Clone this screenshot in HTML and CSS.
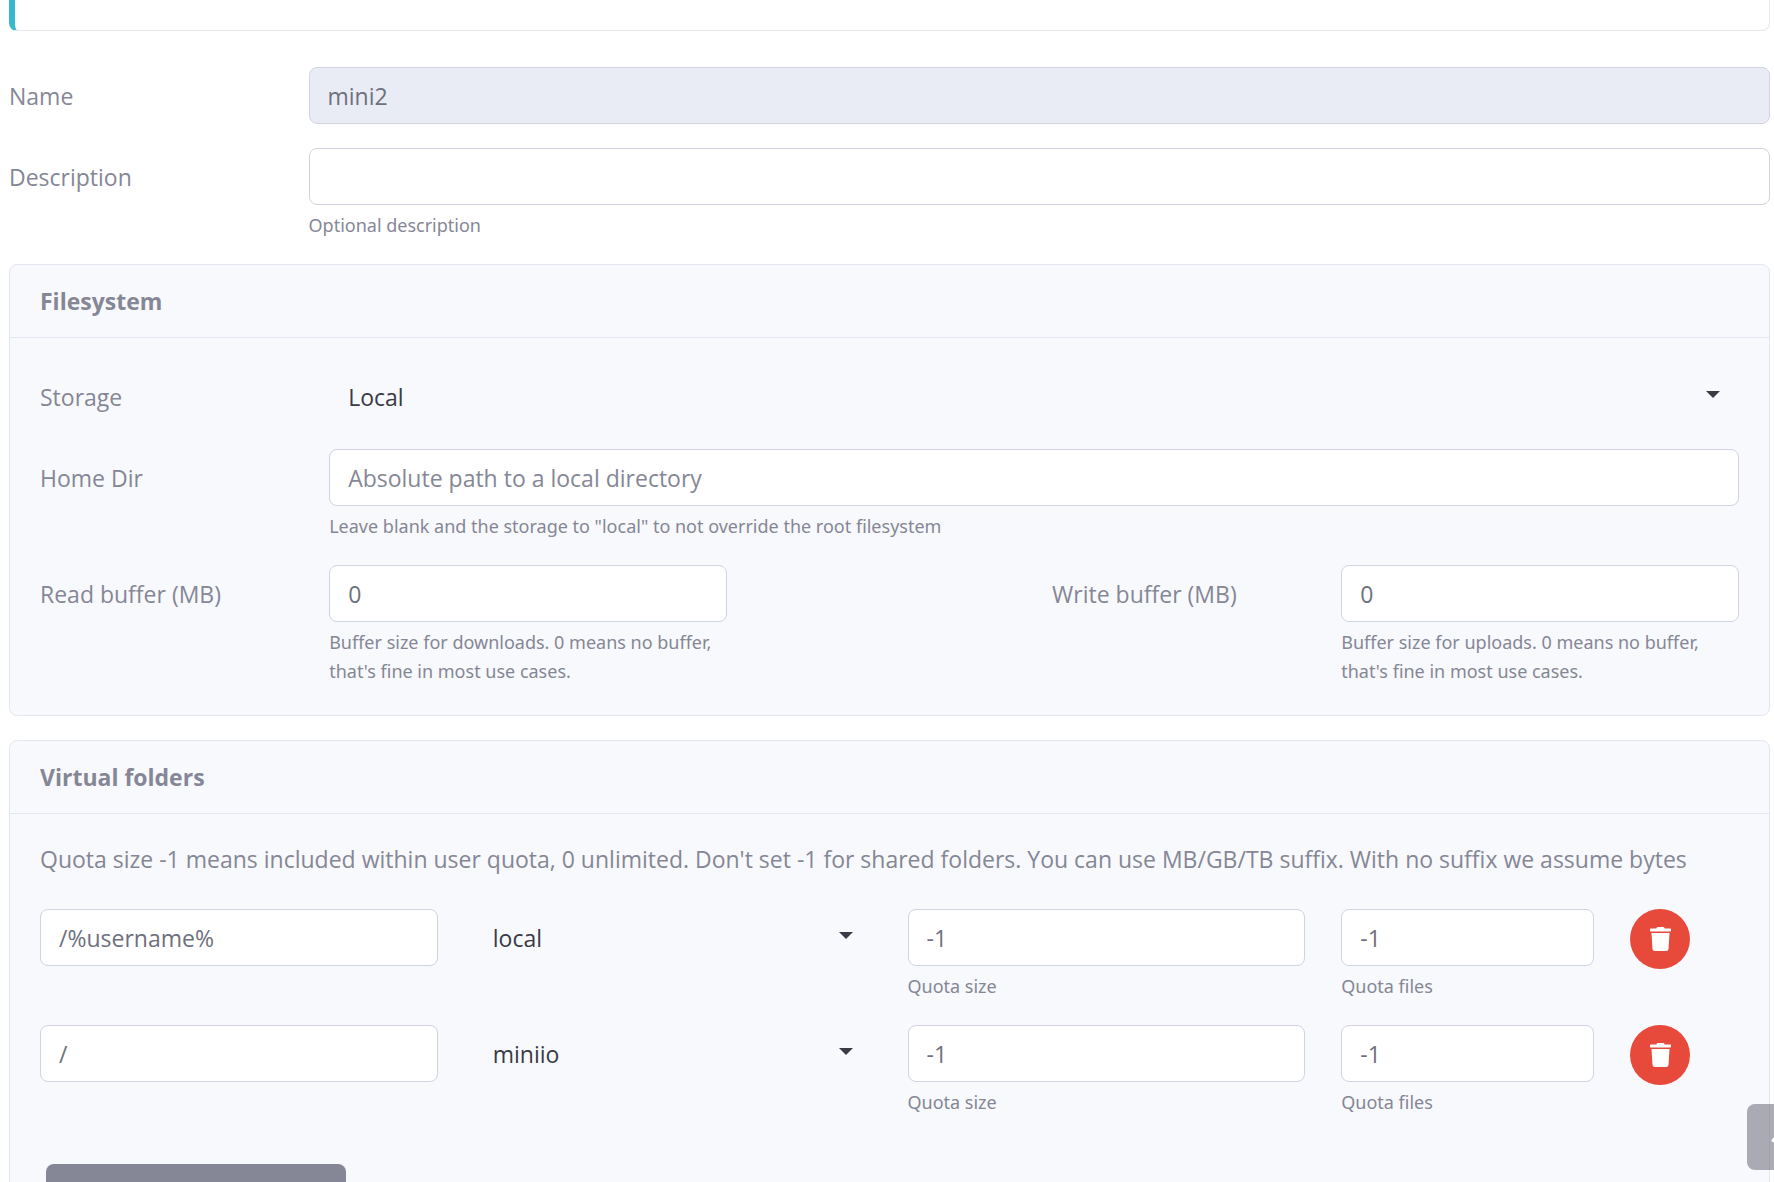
FILE: index.html
```html
<!DOCTYPE html>
<html lang="en">
<head>
<meta charset="utf-8">
<meta name="viewport" content="width=device-width, initial-scale=1">
<title>Group mini2</title>
<link rel="stylesheet" href="styles.css">
</head>
<body>
<main class="page">
  <div class="callout"></div>
  <form class="form">
    <div class="row">
      <label class="label" for="name">Name</label>
      <div class="span-10"><input class="control" id="name" type="text" value="mini2" readonly></div>
    </div>
    <div class="row">
      <label class="label" for="description">Description</label>
      <div class="span-10">
        <input class="control" id="description" type="text" aria-describedby="description-help">
        <small class="help" id="description-help">Optional description</small>
      </div>
    </div>

    <section class="card">
      <h2 class="card-header">Filesystem</h2>
      <div class="card-body">
        <div class="row">
          <label class="label" for="storage">Storage</label>
          <div class="span-10"><select class="control select" id="storage"><option>Local</option></select></div>
        </div>
        <div class="row">
          <label class="label" for="home-dir">Home Dir</label>
          <div class="span-10">
            <input class="control" id="home-dir" type="text" placeholder="Absolute path to a local directory" aria-describedby="home-help">
            <small class="help" id="home-help">Leave blank and the storage to "local" to not override the root filesystem</small>
          </div>
        </div>
        <div class="row">
          <label class="label" for="read-buffer">Read buffer (MB)</label>
          <div class="span-3">
            <input class="control" id="read-buffer" type="text" inputmode="numeric" value="0" aria-describedby="read-help">
            <small class="help" id="read-help">Buffer size for downloads. 0 means no buffer, that's fine in most use cases.</small>
          </div>
          <label class="label second-label" for="write-buffer">Write buffer (MB)</label>
          <div class="span-3">
            <input class="control" id="write-buffer" type="text" inputmode="numeric" value="0" aria-describedby="write-help">
            <small class="help" id="write-help">Buffer size for uploads. 0 means no buffer, that's fine in most use cases.</small>
          </div>
        </div>
      </div>
    </section>

    <section class="card">
      <h2 class="card-header">Virtual folders</h2>
      <div class="card-body folders">
        <p class="note">Quota size -1 means included within user quota, 0 unlimited. Don't set -1 for shared folders. You can use MB/GB/TB suffix. With no suffix we assume bytes</p>
        <div class="row">
          <div class="span-3"><input class="control" type="text" value="/%username%" aria-label="Mount path"></div>
          <div class="span-3"><select class="control select" aria-label="Folder"><option>local</option></select></div>
          <div class="span-3">
            <input class="control" id="size-1" type="text" value="-1">
            <label class="help" for="size-1">Quota size</label>
          </div>
          <div class="span-2">
            <input class="control" id="files-1" type="text" value="-1">
            <label class="help" for="files-1">Quota files</label>
          </div>
          <button class="delete" type="button" aria-label="Delete folder">
            <svg class="trash" viewBox="0 0 448 512" aria-hidden="true"><path d="M432 32H312l-9.400-18.700A24 24 0 0 0 281.100 0H166.800a23.720 23.720 0 0 0-21.400 13.300L136 32H16A16 16 0 0 0 0 48v32a16 16 0 0 0 16 16h416a16 16 0 0 0 16-16V48a16 16 0 0 0-16-16zM32 128l21.200 339a48 48 0 0 0 47.900 45h245.800a48 48 0 0 0 47.900-45L416 128z"/></svg>
          </button>
        </div>
        <div class="row">
          <div class="span-3"><input class="control" type="text" value="/" aria-label="Mount path"></div>
          <div class="span-3"><select class="control select" aria-label="Folder"><option>miniio</option></select></div>
          <div class="span-3">
            <input class="control" id="size-2" type="text" value="-1">
            <label class="help" for="size-2">Quota size</label>
          </div>
          <div class="span-2">
            <input class="control" id="files-2" type="text" value="-1">
            <label class="help" for="files-2">Quota files</label>
          </div>
          <button class="delete" type="button" aria-label="Delete folder">
            <svg class="trash" viewBox="0 0 448 512" aria-hidden="true"><path d="M432 32H312l-9.400-18.700A24 24 0 0 0 281.100 0H166.800a23.720 23.720 0 0 0-21.400 13.300L136 32H16A16 16 0 0 0 0 48v32a16 16 0 0 0 16 16h416a16 16 0 0 0 16-16V48a16 16 0 0 0-16-16zM32 128l21.200 339a48 48 0 0 0 47.900 45h245.800a48 48 0 0 0 47.900-45L416 128z"/></svg>
          </button>
        </div>
        <button class="add" type="button" aria-label="Add folder"></button>
      </div>
    </section>
  </form>
</main>
<a class="to-top" href="#name" aria-label="Back to top">
  <svg class="angle" viewBox="0 0 16 10" aria-hidden="true"><path d="M2 8l6-6 6 6"/></svg>
</a>
</body>
</html>
```

FILE: styles.css
```css
* {
  box-sizing: border-box;
}

body {
  margin: 0;
  height: 100vh;
  overflow: hidden;
  background: #fff;
  color: #858796;
  font-family: "Open Sans", "Noto Sans", sans-serif;
  font-size: 23px;
  line-height: 36px;
}

.page {
  padding: 0 4px 24px 9px;
}

.callout {
  height: 31px;
  margin-bottom: 36px;
  border: 1px solid #e3e6f0;
  border-top: 0;
  border-left: 6px solid #36b9cc;
  border-radius: 0 0 8px 8px;
}

.form,
.card-body {
  display: flex;
  flex-direction: column;
  gap: 24px;
}

.row {
  display: grid;
  grid-template-columns: repeat(12, minmax(0, 1fr));
  column-gap: 36px;
  align-items: start;
}

.label {
  grid-column: span 2;
  padding: 11px 0 10px;
}

.second-label {
  grid-column: 8 / span 2;
}

.span-10 {
  grid-column: span 10;
}

.span-3 {
  grid-column: span 3;
}

.span-2 {
  grid-column: span 2;
}

.control {
  display: block;
  width: 100%;
  height: 57px;
  padding: 0 18px;
  border: 1px solid #d1d3e2;
  border-radius: 8px;
  background: #fff;
  color: #6e707e;
  font: inherit;
}

.control::placeholder {
  color: #858796;
  opacity: 1;
}

.control:read-only:not(.select) {
  background: #e9ecf4;
}

.select {
  appearance: none;
  border-color: transparent;
  background: url("data:image/svg+xml,%3Csvg xmlns='http://www.w3.org/2000/svg' width='14' height='7'%3E%3Cpath d='M0 0h14L7 7z' fill='%233a3b45'/%3E%3C/svg%3E") right 18px top 22px no-repeat;
  color: #3a3b45;
}

.help {
  display: block;
  margin-top: 6px;
  font-family: "Noto Sans", "Open Sans", sans-serif;
  font-size: 18px;
  line-height: 29px;
}

.card {
  border: 1px solid #e3e6f0;
  border-radius: 8px;
  background: #f8f9fc;
}

.card-header {
  margin: 0;
  padding: 18px 30px;
  border-bottom: 1px solid #e3e6f0;
  font-size: 23px;
  font-weight: 700;
}

.card-body {
  padding: 30px 30px 29px;
}

.folders {
  padding-top: 27px;
}

.note {
  margin: 0 0 8px;
  white-space: nowrap;
}

.delete {
  display: flex;
  align-items: center;
  justify-content: center;
  width: 60px;
  height: 60px;
  padding: 0;
  border: 0;
  border-radius: 50%;
  background: #e74a3b;
}

.trash {
  width: 21px;
  height: 24px;
  fill: #fff;
}

.add {
  width: 300px;
  height: 57px;
  margin: 23px 6px 0;
  border: 0;
  border-radius: 8px;
  background: #858796;
}

.to-top {
  position: fixed;
  right: -39px;
  bottom: 12px;
  display: flex;
  align-items: center;
  justify-content: center;
  width: 66px;
  height: 66px;
  border-radius: 8px;
  background: rgba(90, 92, 105, 0.5);
}

.angle {
  width: 18px;
  height: 12px;
  fill: none;
  stroke: #fff;
  stroke-width: 3;
  stroke-linecap: round;
  stroke-linejoin: round;
}
```
